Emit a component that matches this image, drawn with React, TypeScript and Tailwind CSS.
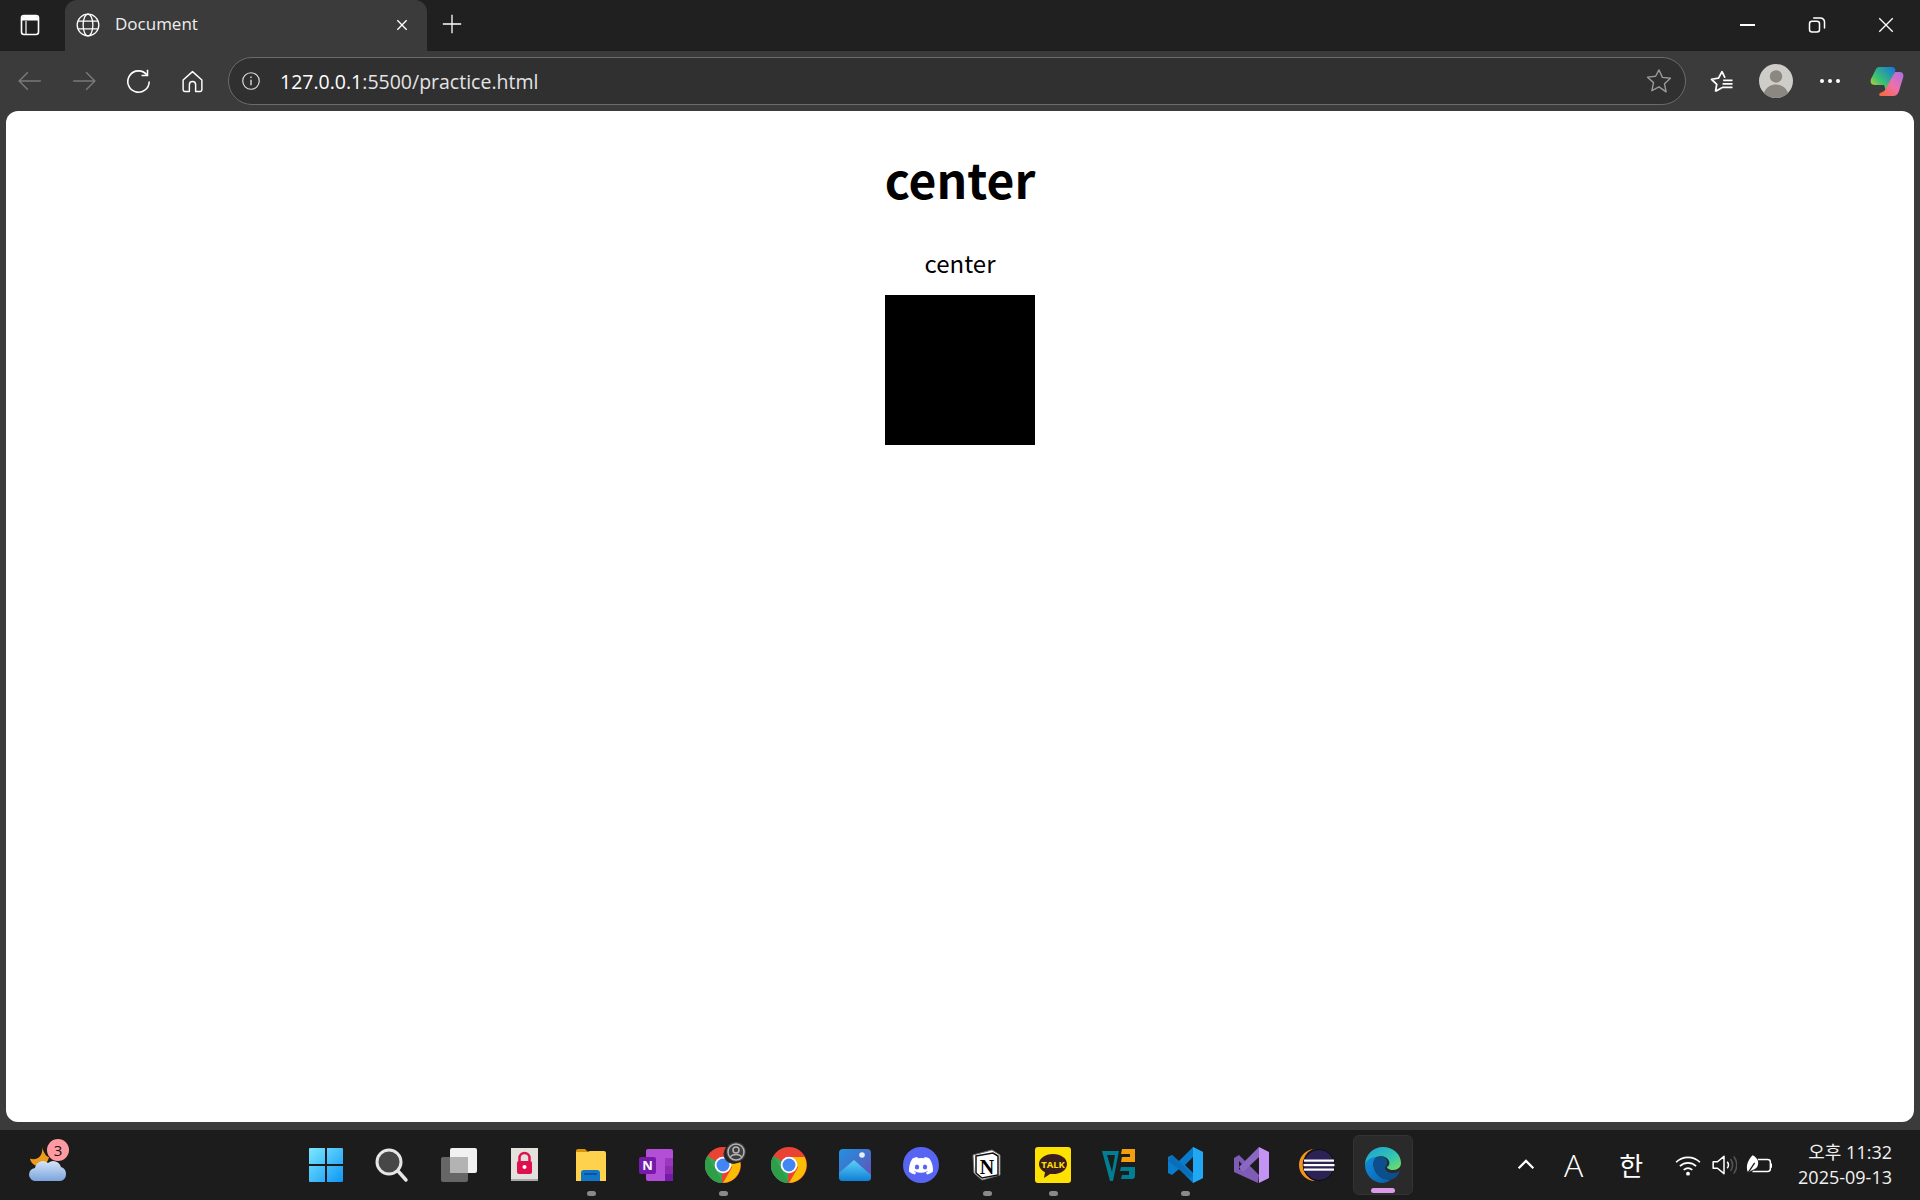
import type { ReactNode } from "react";

const sans = "font-['Noto_Sans_CJK_KR','Noto_Sans',sans-serif]";
const ui = "font-['Open_Sans','Noto_Sans_CJK_KR',sans-serif]";

function Ico({ size = 24, children, className = "" }: { size?: number; children: ReactNode; className?: string }) {
  return (
    <svg width={size} height={size} viewBox="0 0 24 24" fill="none" className={className}>
      {children}
    </svg>
  );
}

function TabBar() {
  return (
    <div className="flex h-[51px] bg-[#202020] text-white">
      <div className="flex w-[65px] items-center justify-center pb-[2px] pr-[5px]">
        <Ico size={24}>
          <rect x="3.5" y="2.5" width="17" height="19" rx="2.5" stroke="#fff" strokeWidth="1.6" />
          <path d="M4 4.5 Q4 3 6 3 H18 Q20 3 20 4.5 V7.5 H4 Z" fill="#fff" />
          <path d="M8 8v13" stroke="#fff" strokeWidth="1.2" />
        </Ico>
      </div>
      <div className="flex h-[51px] w-[362px] items-center rounded-t-[12px] bg-[#3b3b3b] pb-[2px] pl-[10px] pr-[17px]">
        <Ico size={26}>
          <circle cx="12" cy="12" r="10" stroke="#fff" strokeWidth="1.2" />
          <ellipse cx="12" cy="12" rx="4.5" ry="10" stroke="#fff" strokeWidth="1.2" />
          <path d="M2.6 8.5h18.8M2.6 15.5h18.8" stroke="#fff" strokeWidth="1.2" />
        </Ico>
        <span className={`ml-[14px] flex-1 pb-[1px] text-[17px] text-[#eeeeee] ${ui}`}>Document</span>
        <Ico size={16}>
          <path d="M5 5l14 14M19 5L5 19" stroke="#fff" strokeWidth="2" />
        </Ico>
      </div>
      <div className="flex w-[50px] items-center justify-center pb-[4px]">
        <Ico size={22}>
          <path d="M12 2v20M2 12h20" stroke="#fff" strokeWidth="1.4" />
        </Ico>
      </div>
      <div className="flex flex-1 items-center justify-end pb-[1px]">
        <div className="flex w-[69px] justify-center">
          <div className="h-[2px] w-[15px] bg-white" />
        </div>
        <div className="flex w-[69px] justify-center">
          <Ico size={20}>
            <rect x="3" y="7.5" width="12" height="13" rx="3" stroke="#fff" strokeWidth="1.8" />
            <path d="M8 3.5h8a5 5 0 015 5v7" stroke="#fff" strokeWidth="1.8" strokeLinecap="round" />
          </Ico>
        </div>
        <div className="flex w-[69px] justify-center">
          <Ico size={18}>
            <path d="M3 3l18 18M21 3L3 21" stroke="#fff" strokeWidth="1.8" />
          </Ico>
        </div>
      </div>
    </div>
  );
}

function ToolBar() {
  return (
    <div className="flex h-[60px] items-center bg-[#3b3b3b] text-white">
      <div className="flex w-[228px] items-center pl-[3px]">
        <div className="flex w-[54px] justify-center">
          <Ico size={26}>
            <path d="M22 12H2.5M10 4l-8 8 8 8" stroke="#7a7a7a" strokeWidth="1.3" />
          </Ico>
        </div>
        <div className="flex w-[54px] justify-center">
          <Ico size={26}>
            <path d="M2 12h19.5M14 4l8 8-8 8" stroke="#7a7a7a" strokeWidth="1.3" />
          </Ico>
        </div>
        <div className="flex w-[54px] justify-center">
          <Ico size={27}>
            <path d="M19.5 6.2A9.5 9.5 0 1021.5 12" stroke="#fff" strokeWidth="1.4" />
            <path d="M20 1.5v5.2h-5.3" stroke="#fff" strokeWidth="1.4" />
          </Ico>
        </div>
        <div className="flex w-[54px] justify-center">
          <Ico size={25}>
            <path
              d="M12 2.5L3 10.5V20a1.5 1.5 0 001.5 1.5H9V15a3 3 0 016 0v6.5h4.5A1.5 1.5 0 0021 20v-9.5z"
              stroke="#fff"
              strokeWidth="1.4"
              strokeLinejoin="round"
            />
          </Ico>
        </div>
      </div>
      <div className="flex h-[48px] w-[1458px] items-center rounded-full border border-[#6b6b6b] bg-[#303030] pl-[11px] pr-[12px]">
        <Ico size={22}>
          <circle cx="12" cy="12" r="9" stroke="#ddd" strokeWidth="1.3" />
          <path d="M12 10.5v6M12 7v1.6" stroke="#ddd" strokeWidth="1.5" />
        </Ico>
        <span className={`ml-[18px] flex-1 pt-[1px] text-[19.5px] text-white ${ui}`}>
          127.0.0.1<span className="text-[#e4e4e4]">:5500/practice.html</span>
        </span>
        <Ico size={28}>
          <path
            d="M12 2.5l2.9 6.4 6.9.8-5.1 4.7 1.4 6.9L12 17l-6.1 3.3 1.4-6.9-5.1-4.7 6.9-.8z"
            stroke="#9a9a9a"
            strokeWidth="1.2"
            strokeLinejoin="round"
          />
        </Ico>
      </div>
      <div className="ml-[9px] flex flex-1 items-center">
        <div className="flex w-[54px] justify-center">
          <Ico size={28}>
            <path
              d="M6.5 20.5l1-5.700-4.500-4.300 6-.9L12 4l2.300 4.700M7 20.500l4.500-2.500"
              stroke="#fff"
              strokeWidth="1.500"
              strokeLinejoin="round"
              strokeLinecap="round"
            />
            <path d="M13 11.500h8M12.500 14.500h8.500M12 17.500h9" stroke="#fff" strokeWidth="1.400" />
          </Ico>
        </div>
        <div className="flex w-[54px] justify-center">
          <Ico size={34}>
            <circle cx="12" cy="12" r="12" fill="#cfcdca" />
            <circle cx="12" cy="8.8" r="4.4" fill="#8b8781" />
            <path d="M3.5 20.5C5 16 9 14.5 12 14.5s7 1.5 8.500 6A12 12 0 0112 24a12 12 0 01-8.500-3.500z" fill="#8b8781" />
          </Ico>
        </div>
        <div className="flex w-[54px] justify-center gap-[4px]">
          <div className="size-[4px] rounded-full bg-white" />
          <div className="size-[4px] rounded-full bg-white" />
          <div className="size-[4px] rounded-full bg-white" />
        </div>
        <div className="flex w-[60px] justify-center">
          <svg width="34" height="32" viewBox="0 0 34 32">
            <defs>
              <linearGradient id="cpA" x1="0" y1="1" x2="1" y2="0">
                <stop offset="0" stopColor="#f9d423" />
                <stop offset="0.4" stopColor="#3ec46d" />
                <stop offset="1" stopColor="#1273e0" />
              </linearGradient>
              <linearGradient id="cpB" x1="1" y1="0" x2="0" y2="1">
                <stop offset="0" stopColor="#a970e8" />
                <stop offset="0.5" stopColor="#f06fa8" />
                <stop offset="1" stopColor="#f6692f" />
              </linearGradient>
            </defs>
            <path d="M9 2h13c2 0 3 1 3.500 3L19 26c-.5 1-2 1-3 0l-2-6H5c-4 0-5-3-4-6L6 4c.5-1 1.500-2 3-2z" fill="url(#cpA)" />
            <path d="M25 7h5c3 0 4 3 3 6l-4 13c-.8 3-3 5-6 5H11c-2 0-2.500-2-1-3 3-1 5-2 6-5z" fill="url(#cpB)" />
          </svg>
        </div>
      </div>
    </div>
  );
}

function Page() {
  return (
    <div className="mx-[6px] flex h-[1011px] flex-col items-center rounded-[12px] bg-white pt-[31px] text-black">
      <h1 className={`text-[48px] font-bold leading-[72px] ${sans}`}>center</h1>
      <p className={`mb-[14px] mt-[31px] text-[24px] leading-[36px] ${sans}`}>center</p>
      <div className="size-[150px] bg-black" />
    </div>
  );
}

function TaskIcon({ children, dot, active }: { children: ReactNode; dot?: boolean; active?: boolean }) {
  return (
    <div
      className={`relative mx-[3px] flex h-[60px] w-[60px] flex-col items-center justify-center rounded-[6px] ${
        active ? "border border-[#333333] bg-[#2a2a2a]" : ""
      }`}
    >
      {children}
      {dot && <div className="absolute bottom-[-1px] h-[5px] w-[9px] rounded-full bg-[#8a8a8a]" />}
      {active && <div className="absolute bottom-[1px] h-[5px] w-[24px] rounded-full bg-[#dc9be6]" />}
    </div>
  );
}

function Chrome() {
  return (
    <svg width="36" height="36" viewBox="0 0 36 36">
      <circle cx="18" cy="18" r="18" fill="#ea4335" />
      <path d="M18 36A18 18 0 012.400 9L18 18l-1.500 18z" fill="#34a853" />
      <path d="M2.400 9L10 22l8 14A18 18 0 012.400 9z" fill="#2f9e4a" />
      <path d="M18 36l9-15.500L18 10h15.600A18 18 0 0118 36z" fill="#fbbc04" />
      <circle cx="18" cy="18" r="8.300" fill="#fff" />
      <circle cx="18" cy="18" r="6.500" fill="#4285f4" />
    </svg>
  );
}

function TaskIcons() {
  return (
    <div className="flex items-center">
      <TaskIcon>
        <svg width="36" height="36" viewBox="0 0 36 36">
          <defs>
            <linearGradient id="win" x1="0" y1="0" x2="1" y2="1">
              <stop offset="0" stopColor="#7ce8ff" />
              <stop offset="1" stopColor="#0f96f5" />
            </linearGradient>
          </defs>
          <path d="M0 2a1 1 0 011-1h15v16H0zM18 1h15a1 1 0 011 1v15H18zM0 19h16v16H1a1 1 0 01-1-1zM18 19h16v15a1 1 0 01-1 1H18z" fill="url(#win)" />
        </svg>
      </TaskIcon>
      <TaskIcon>
        <svg width="36" height="36" viewBox="0 0 36 36">
          <circle cx="14" cy="15" r="12" fill="#474747" stroke="#e6e6e6" strokeWidth="3" />
          <path d="M23 24l8 9" stroke="#e6e6e6" strokeWidth="3.500" strokeLinecap="round" />
        </svg>
      </TaskIcon>
      <TaskIcon>
        <svg width="36" height="34" viewBox="0 0 36 34">
          <rect x="0" y="9" width="27" height="25" rx="2" fill="#666666" />
          <rect x="9" y="0" width="27" height="25" rx="2" fill="#f1f1f1" />
          <rect x="9" y="9" width="18" height="16" fill="#b3b3b3" />
        </svg>
      </TaskIcon>
      <TaskIcon>
        <svg width="28" height="34" viewBox="0 0 28 34">
          <rect width="27" height="33" fill="#e3e1dc" />
          <rect y="31" width="27" height="2" fill="#a8a8a8" />
          <path d="M8.500 14V10a5 5 0 0110 0v4" fill="none" stroke="#e0104f" strokeWidth="2.500" />
          <rect x="6" y="13" width="15" height="13" rx="2" fill="#e0104f" />
          <circle cx="13.500" cy="19" r="2" fill="#fff" />
        </svg>
      </TaskIcon>
      <TaskIcon dot>
        <svg width="30" height="34" viewBox="0 0 30 34">
          <path d="M0 3a2 2 0 012-2h7l3 3h-12z" fill="#d9940a" />
          <path d="M0 4h11l3-1h14a2 2 0 012 2v28H0z" fill="#ffd24d" />
          <path d="M5 33v-8a3 3 0 013-3h13a3 3 0 013 3v8z" fill="#0f76c9" />
          <path d="M8 26h13" stroke="#0a4a86" strokeWidth="1.500" />
        </svg>
      </TaskIcon>
      <TaskIcon>
        <svg width="36" height="36" viewBox="0 0 36 36">
          <rect x="7" y="2" width="27" height="32" rx="2" fill="#b24fd6" />
          <rect x="26" y="11" width="8" height="8" fill="#9c35c0" />
          <rect x="26" y="19" width="8" height="8" fill="#8a2bb0" />
          <rect x="26" y="27" width="8" height="7" fill="#7719aa" />
          <rect x="0" y="10" width="17" height="17" rx="2" fill="#7719aa" />
          <text x="8.500" y="23" textAnchor="middle" fontSize="13" fontWeight="700" fill="#fff" fontFamily="Open Sans, sans-serif">N</text>
        </svg>
      </TaskIcon>
      <TaskIcon dot>
        <div className="relative">
          <Chrome />
          <svg width="24" height="24" viewBox="0 0 24 24" className="absolute left-[18px] top-[-6px]">
            <circle cx="10.500" cy="13" r="10" fill="#2a2a2a" />
            <circle cx="13" cy="11" r="10.500" fill="#3e3e3e" stroke="#1c1c1c" />
            <circle cx="13" cy="11" r="8" fill="none" stroke="#b5b5b5" strokeWidth="1.500" />
            <circle cx="13" cy="9" r="3" fill="none" stroke="#b5b5b5" strokeWidth="1.500" />
            <path d="M7.500 16c1-2 3-2.500 5.500-2.500s4.500.5 5.500 2.500" fill="none" stroke="#b5b5b5" strokeWidth="1.500" />
          </svg>
        </div>
      </TaskIcon>
      <TaskIcon>
        <Chrome />
      </TaskIcon>
      <TaskIcon>
        <svg width="32" height="32" viewBox="0 0 32 32">
          <defs>
            <linearGradient id="ph" x1="0" y1="0" x2="1" y2="1">
              <stop offset="0" stopColor="#1e94e0" />
              <stop offset="1" stopColor="#6b4bb5" />
            </linearGradient>
            <linearGradient id="ph2" x1="0" y1="0" x2="0" y2="1">
              <stop offset="0" stopColor="#5ed2f5" />
              <stop offset="1" stopColor="#0f7fd8" />
            </linearGradient>
          </defs>
          <rect width="32" height="32" rx="4" fill="url(#ph)" />
          <path d="M0 24L15 11l17 15v2a4 4 0 01-4 4H4a4 4 0 01-4-4z" fill="url(#ph2)" />
          <circle cx="23" cy="6" r="2.800" fill="#e6eefb" />
        </svg>
      </TaskIcon>
      <TaskIcon>
        <svg width="36" height="36" viewBox="0 0 36 36">
          <circle cx="18" cy="18" r="18" fill="#5865f2" />
          <path
            d="M26.500 11.500A20 20 0 0021.700 10l-.6 1.300a18 18 0 00-6.200 0L14.300 10a20 20 0 00-4.800 1.500C6.500 16 5.700 20.400 6.100 24.700A19 19 0 0012 27.600l1.200-2a12 12 0 01-1.900-.9l.5-.4a13.700 13.700 0 0012.400 0l.5.4a12 12 0 01-1.900.9l1.200 2a19 19 0 005.900-2.900c.5-5-.8-9.300-3.400-13.200z"
            fill="#fff"
          />
          <ellipse cx="14" cy="20" rx="2.200" ry="2.500" fill="#5865f2" />
          <ellipse cx="22" cy="20" rx="2.200" ry="2.500" fill="#5865f2" />
        </svg>
      </TaskIcon>
      <TaskIcon dot>
        <svg width="30" height="32" viewBox="0 0 30 32">
          <path d="M1 6l19-5 8 5v20l-18 5-8-7z" fill="#fff" stroke="#777" strokeWidth="1" />
          <path d="M4 7l17-3 5 3v19l-16 3-6-5z" fill="#fff" stroke="#111" strokeWidth="1.500" />
          <text x="15" y="25" textAnchor="middle" fontSize="20" fontWeight="700" fill="#000" fontFamily="Liberation Serif, serif">N</text>
        </svg>
      </TaskIcon>
      <TaskIcon dot>
        <svg width="36" height="36" viewBox="0 0 36 36">
          <rect width="36" height="36" rx="3" fill="#ffe100" />
          <path d="M18 7C10 7 4 11.500 4 17c0 3.500 2.500 6.500 6 8.300L9 31l6-4.100c1 .1 2 .2 3 .2 8 0 14-4.500 14-10.100S26 7 18 7z" fill="#3a1d1d" />
          <text x="18" y="21" textAnchor="middle" fontSize="9.500" fontWeight="700" fill="#ffe100" fontFamily="Open Sans, sans-serif">TALK</text>
        </svg>
      </TaskIcon>
      <TaskIcon>
        <svg width="36" height="34" viewBox="0 0 36 34">
          <path d="M1 3h17l-6 30H9z M6 7l5 17 3-17z" fill="#007f94" fillRule="evenodd" />
          <path d="M21 1h13v13H20l1-5h8V6h-9z" fill="#f59e0b" />
          <path d="M20 19h14v9a3 3 0 01-3 3H20l1-4h7v-4h-9z" fill="#007f94" />
        </svg>
      </TaskIcon>
      <TaskIcon dot>
        <svg width="36" height="36" viewBox="0 0 36 36">
          <path d="M26 0l10 5v26l-10 5-14-14-7 6-4-2V10l4-2 7 6zM26 10l-8 8 8 8z" fill="#0a7ccc" fillRule="evenodd" />
          <path d="M26 0l10 5v26l-10 5z" fill="#21a8f2" />
          <path d="M5 8l21 20-3 3L1 14z" fill="#0a6fb8" />
        </svg>
      </TaskIcon>
      <TaskIcon>
        <svg width="36" height="36" viewBox="0 0 36 36">
          <path d="M1 11l5-3 20 20-1 8L1 25z M6 14v9l4-4.500z" fill="#7e5bb5" fillRule="evenodd" />
          <path d="M26 0L6 20l4 5L26 10z" fill="#8a67c3" />
          <path d="M26 0l10 5v26l-10 5z" fill="#c392f2" />
        </svg>
      </TaskIcon>
      <TaskIcon>
        <svg width="36" height="34" viewBox="0 0 36 34">
          <path d="M16 1A16 16 0 0016 33a17 17 0 01-2-32z" fill="#f7941e" />
          <circle cx="20" cy="17" r="15.500" fill="#2c2255" stroke="#0e0e0e" />
          <rect x="5" y="11.500" width="30" height="2.200" fill="#fff" />
          <rect x="4.500" y="16" width="31" height="2.200" fill="#fff" />
          <rect x="5" y="20.500" width="30" height="2.200" fill="#fff" />
        </svg>
      </TaskIcon>
      <TaskIcon active>
        <svg width="36" height="36" viewBox="0 0 36 36">
          <defs>
            <linearGradient id="eA" x1="0" y1="0" x2="1" y2="1">
              <stop offset="0" stopColor="#1c9ed8" />
              <stop offset="0.6" stopColor="#32c7b0" />
              <stop offset="1" stopColor="#7ee05a" />
            </linearGradient>
            <linearGradient id="eB" x1="0" y1="0" x2="1" y2="1">
              <stop offset="0" stopColor="#0f8fe0" />
              <stop offset="1" stopColor="#0b5da8" />
            </linearGradient>
          </defs>
          <path d="M18 0c10 0 18 7 18 16 0 4-3 7-8 7-4 0-6-2-6-3 2-1 3-3 2-6-1.500-4-7-6-13-4C6 12 1 15 0 18 0 8 8 0 18 0z" fill="url(#eA)" />
          <path d="M0 18C1 13 6 10 12 10c-3 2-4 5-3.500 9 .8 7 8 15 18 13.500A18 18 0 0118 36C8 36 0 28 0 18z" fill="url(#eB)" />
          <path d="M12 10c5-1.500 9 0 10 4 .8 3-.5 5-2 6 0 4 4 6 8 6 3 0 6-1 7-3-1 5-4 8-8.500 9.500C16.500 34 9.300 26 8.500 19 8 15 9 12 12 10z" fill="#0c4f8f" />
        </svg>
      </TaskIcon>
    </div>
  );
}

function Taskbar() {
  return (
    <div className="flex h-[70px] items-center bg-[#1c1c1c] text-white">
      <div className="flex w-[294px] pl-[28px]">
        <svg width="44" height="44" viewBox="0 0 44 44" className="overflow-visible">
          <defs>
            <linearGradient id="cl" x1="0" y1="0" x2="0" y2="1">
              <stop offset="0" stopColor="#d3e4f8" />
              <stop offset="1" stopColor="#7ba4dc" />
            </linearGradient>
          </defs>
          <path d="M14 4c1 5-1 9-4 11-3 1.500-6 1.500-8 .5 1 5 5 8 10 7.500 5-1 8-4 9-9-2 0-5-3-7-10z" fill="#f09a1a" />
          <path d="M8 38a6.500 6.500 0 01-1-13 8 8 0 0113-5 8 8 0 0113 4 7 7 0 015 7.500 6.500 6.500 0 01-6 6.500z" fill="url(#cl)" />
          <circle cx="30" cy="7" r="11" fill="#ff9aa2" />
          <text x="30" y="12.500" textAnchor="middle" fontSize="15" fill="#111" fontFamily="Open Sans, sans-serif">3</text>
        </svg>
      </div>
      <TaskIcons />
      <div className="flex flex-1 items-center justify-end pr-[28px]">
        <Ico size={22} className="mr-[27px]">
          <path d="M4 15.500l8-8 8 8" stroke="#fff" strokeWidth="2.400" />
        </Ico>
        <span className={`mr-[36px] text-[32px] font-light leading-none ${ui}`}>A</span>
        <span className={`mr-[32px] text-[26px] leading-none ${sans}`}>한</span>
        <Ico size={26} className="mr-[10px]">
          <path d="M1 9.500C7 3.500 17 3.500 23 9.500M4.500 13c4.500-4 10.500-4 15 0M8 16.500c2.500-2 5.500-2 8 0" stroke="#fff" strokeWidth="1.500" />
          <circle cx="12" cy="20" r="1.800" fill="#fff" />
        </Ico>
        <Ico size={26} className="mr-[9px]">
          <path d="M2 9h4l6-5v16l-6-5H2z" stroke="#fff" strokeWidth="1.400" strokeLinejoin="round" />
          <path d="M15 9c1.500 2 1.500 4 0 6" stroke="#fff" strokeWidth="1.400" />
          <path d="M18 6.500c2.500 3.500 2.500 7.500 0 11M21 4c3.500 5 3.500 11 0 16" stroke="#555" strokeWidth="1.400" />
        </Ico>
        <Ico size={26} className="mr-[26px]">
          <path d="M11 7h9a2.500 2.500 0 012.500 2.500v6A2.500 2.500 0 0120 18H6" stroke="#fff" strokeWidth="1.400" />
          <path d="M24 10.500v4" stroke="#fff" strokeWidth="2" />
          <path d="M6 3c4 2 6 5 5 9-.7 2.700-2.500 4-5 4.500L2 19c-1-2-1.500-4-1-7 .5-3 2.500-6.500 5-9z" fill="#fff" />
          <path d="M2 19l6-9" stroke="#1c1c1c" strokeWidth="1.200" />
        </Ico>
        <div className={`flex flex-col items-end text-[18px] leading-[25px] text-[#f2f2f2] ${ui}`}>
          <span>오후 11:32</span>
          <span>2025-09-13</span>
        </div>
      </div>
    </div>
  );
}

export default function App() {
  return (
    <div className="flex h-[1200px] w-[1920px] flex-col overflow-hidden bg-[#3b3b3b]">
      <TabBar />
      <ToolBar />
      <Page />
      <div className="h-[8px]" />
      <Taskbar />
    </div>
  );
}
